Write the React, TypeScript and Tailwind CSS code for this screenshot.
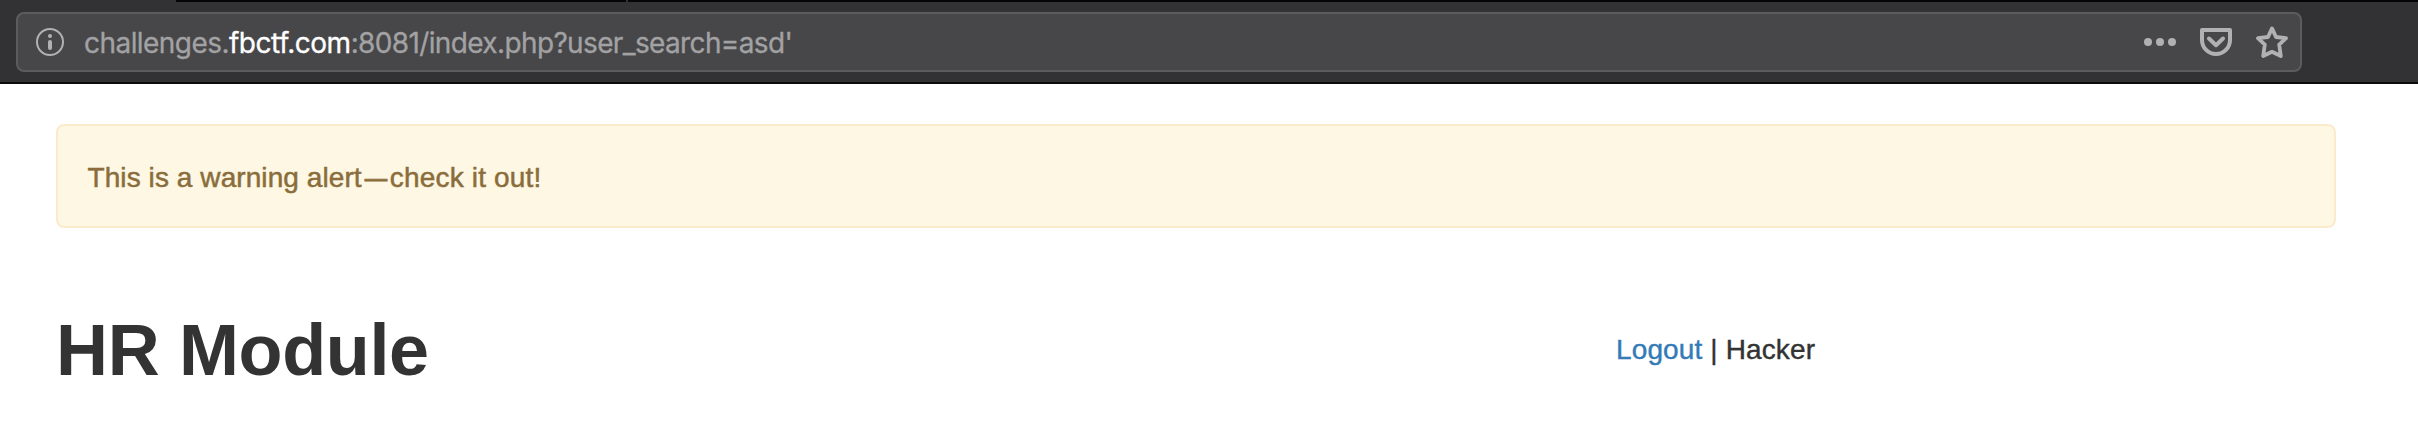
function InfoIcon() {
  return (
    <svg className="size-7 shrink-0" viewBox="0 0 28 28" fill="none">
      <circle cx="14" cy="14" r="13" stroke="#b1b1b3" strokeWidth="2" />
      <circle cx="14" cy="8" r="2" fill="#b1b1b3" />
      <rect x="12" y="12" width="4" height="10" rx="2" fill="#b1b1b3" />
    </svg>
  );
}

function DotsIcon() {
  return (
    <svg className="size-8" viewBox="0 0 32 32" fill="#b1b1b3">
      <circle cx="4" cy="16" r="4" />
      <circle cx="16" cy="16" r="4" />
      <circle cx="28" cy="16" r="4" />
    </svg>
  );
}

function PocketIcon() {
  return (
    <svg className="size-8" viewBox="0 0 32 32" fill="none" stroke="#b1b1b3" strokeWidth="4" strokeLinejoin="round" strokeLinecap="round">
      <path d="M2 4h28v10a14 14 0 0 1-28 0z" />
      <path d="M9 12.5l7 6.7 7-6.7" />
    </svg>
  );
}

function StarIcon() {
  return (
    <svg className="size-8" viewBox="0 0 32 32" fill="none" stroke="#b1b1b3" strokeWidth="3.8" strokeLinejoin="round">
      <path d="M16 2.4l4 8.6 10 1.2-6.8 6.4 1.6 11.4L16 25.8 7.2 30l1.6-11.4L2 12.2 12 11z" />
    </svg>
  );
}

export default function App() {
  return (
    <div className="h-[424px] w-full overflow-hidden bg-white font-['Liberation_Sans',Arial,sans-serif] text-[28px] leading-10 text-[#333333]">
      <header className="flex h-[84px] flex-col border-b-2 border-[#0c0c0d] bg-[#323234]">
        <div className="flex h-0.5 shrink-0 gap-0.5 pl-44">
          <div className="w-[450px] bg-[#050506]" />
          <div className="flex-1 bg-[#050506]" />
        </div>
        <div className="mt-2.5 ml-4 flex h-[60px] w-[2286px] items-center rounded-lg border-2 border-[#5c5c5e] bg-[#474749] pr-3 pl-[18px]">
          <InfoIcon />
          <div className="ml-5 flex flex-1 pt-0.5 font-['Inter',sans-serif] whitespace-pre text-[#a2a2a4] [-webkit-text-stroke:0.3px]">
            <span className="tracking-[-0.55px]">challenges.</span>
            <span className="tracking-[-0.5px] text-white">fbctf.com</span>
            <span className="tracking-[-0.63px]">:8081/index.php?user_search=asd'</span>
          </div>
          <div className="flex gap-6">
            <DotsIcon />
            <PocketIcon />
            <StarIcon />
          </div>
        </div>
      </header>
      <main className="px-14 pt-10">
        <div className="flex h-[104px] w-[2280px] items-center rounded-lg border-2 border-[#faebcc] bg-[#fdf7e3] pt-[3px] pr-[30px] pl-[29.5px] text-[#8a6d3b]">
          <p className="tracking-[0.08px] [-webkit-text-stroke:0.5px]">
            This is a warning alert<span className="inline-block scale-x-[0.8] [-webkit-text-stroke:0.9px]">—</span>
            <span className="tracking-[0.18px]">check it out!</span>
          </p>
        </div>
        <div className="mt-[82px] flex h-20 items-center">
          <h1 className="w-[1560px] text-[72px] leading-[80px] font-bold tracking-[-0.35px]">HR Module</h1>
          <p className="tracking-[0.13px] [-webkit-text-stroke:0.4px]">
            <a className="text-[#337ab7]">Logout</a> | Hacker
          </p>
        </div>
      </main>
    </div>
  );
}
